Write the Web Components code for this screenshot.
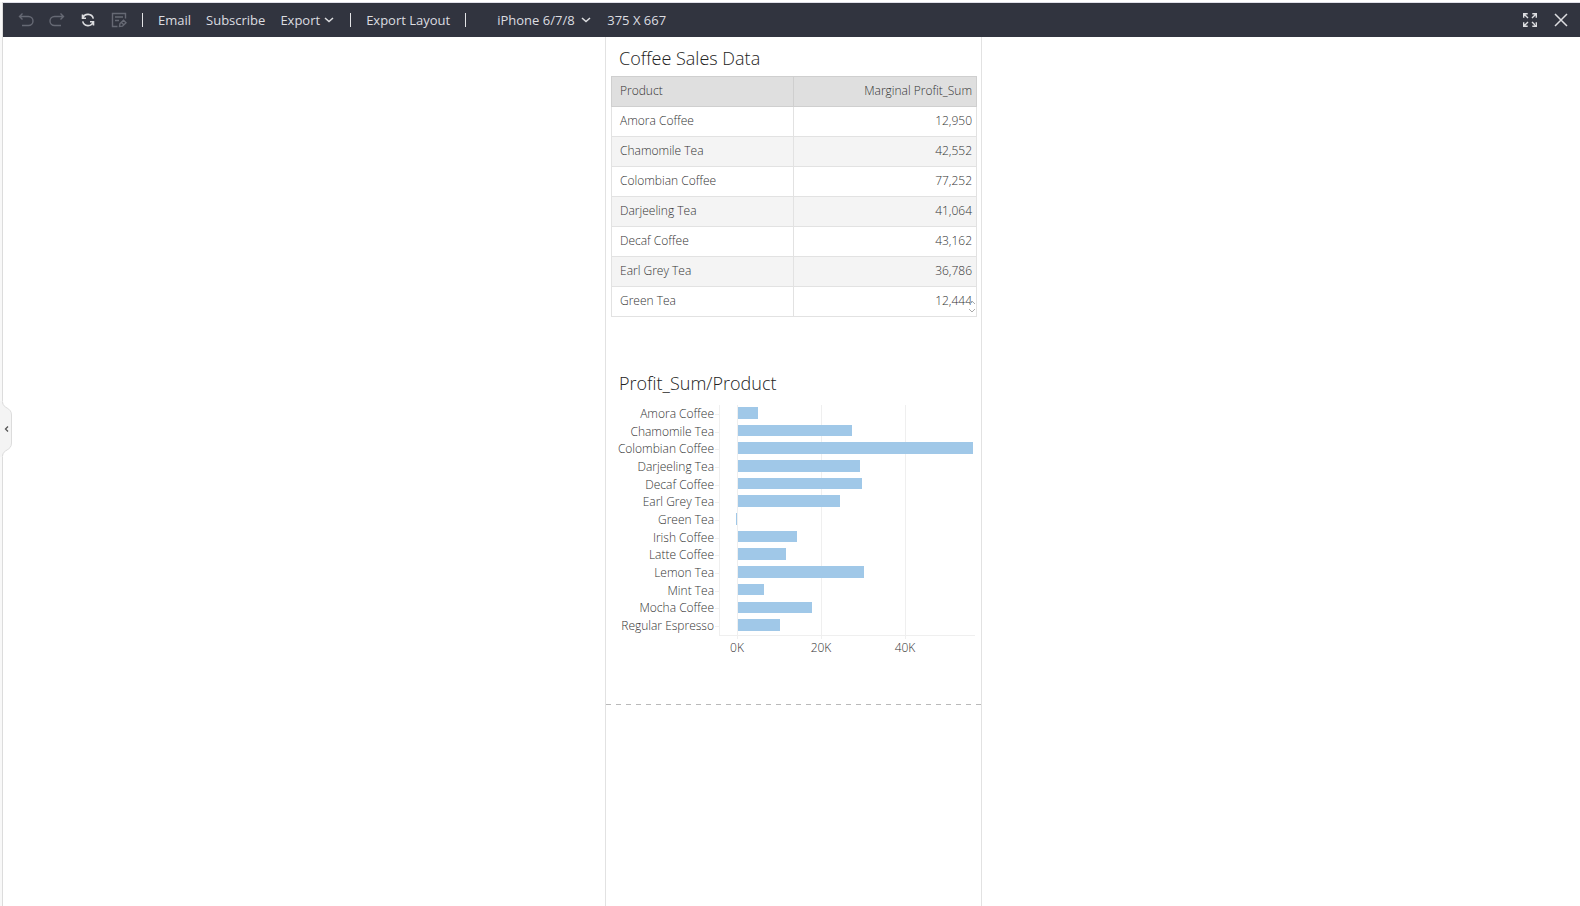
<!DOCTYPE html>
<html lang="en">
<head>
<meta charset="utf-8">
<title>Coffee Sales Data</title>
<style>
  html, body { margin: 0; height: 100%; }
  body { background: #fff; font-family: "Open Sans", "Noto Sans", sans-serif; color: #444; overflow: hidden; }
</style>
</head>
<body>
<layout-preview></layout-preview>

<template id="t-preview">
  <style>
    :host { display: grid; grid-template: 2px 1fr / 3px 1fr; height: 100vh; }
    .frame { grid-area: 2 / 2; display: flex; flex-direction: column; min-width: 0; min-height: 0; border-top: 1px solid #dfdfe8; }
    pane-handle { grid-area: 2 / 1; }
    main { flex: 1; min-height: 0; display: flex; justify-content: center; padding-left: 4px; overflow: hidden; }
  </style>
  <pane-handle></pane-handle>
  <div class="frame">
    <tool-bar></tool-bar>
    <main>
      <device-canvas>
        <dash-card heading="Coffee Sales Data"><profit-table></profit-table></dash-card>
        <dash-card heading="Profit_Sum/Product"><bar-chart></bar-chart></dash-card>
      </device-canvas>
    </main>
  </div>
</template>

<template id="t-handle">
  <style>
    :host { display: flex; align-items: center; box-sizing: border-box; width: 3px; padding-bottom: 50px; background: #f8f8f8; border-right: 1px solid #dcdcdc; }
    button { flex: none; width: 12px; height: 56px; padding: 0; border: 0; background: none; position: relative; z-index: 1; }
    svg { display: block; }
  </style>
  <button aria-label="Collapse panel">
    <svg width="12" height="56" viewBox="0 0 12 56"><path d="M0 0H2.500V1C3 8 11.500 6 11.500 14V42C11.500 50 3 48 2.500 55V56H0Z" fill="#f4f4f4"/><path d="M2.500 1C3 8 11.500 6 11.500 14V42C11.500 50 3 48 2.500 55" fill="none" stroke="#dcdcdc"/><path d="M8 25.500L5.500 28L8 30.500" fill="none" stroke="#555" stroke-width="1.300"/></svg>
  </button>
</template>

<template id="t-toolbar">
  <style>
    :host { display: flex; align-items: center; flex: none; height: 34px; box-sizing: border-box; padding: 0 12px 0 15px; background: #31343f; color: #dcdde0; font-size: 13px; line-height: 20px; white-space: nowrap; }
    svg { display: block; fill: none; stroke: currentColor; }
    button, select { font: inherit; color: inherit; background: none; border: 0; padding: 0; margin: 0; }
    .icons { display: flex; gap: 15px; }
    .off { color: #666974; }
    i { width: 1px; height: 14px; background: #e2e3e6; }
    .texts { display: flex; gap: 15px; margin: 0 16px 0 15px; }
    .menu { display: flex; align-items: center; gap: 4px; }
    .layout { margin: 0 15px; }
    .device { display: flex; align-items: center; position: relative; margin-left: 31px; }
    .device select { appearance: none; width: 94px; outline: 0; }
    .device svg { position: absolute; right: 0; pointer-events: none; }
    .size { margin-left: 16px; }
    .end { display: flex; align-items: center; gap: 17px; margin-left: auto; }
  </style>
  <div class="icons">
    <button class="off" disabled aria-label="Undo"><svg width="16" height="16" viewBox="0 0 16 16" stroke-width="1.400"><path d="M4.500 1.500L1.500 4.500L4.500 7.500M1.500 4.500H10.500A4.500 4.500 0 0 1 10.500 13.500H4"/></svg></button>
    <button class="off" disabled aria-label="Redo"><svg width="16" height="16" viewBox="0 0 16 16" stroke-width="1.400"><path d="M11.500 1.500L14.500 4.500L11.500 7.500M14.500 4.500H5.500A4.500 4.500 0 0 0 5.500 13.500H12"/></svg></button>
    <button aria-label="Refresh"><svg width="16" height="16" viewBox="0 0 16 16" stroke-width="1.600"><path d="M2.500 2.500V6.300H6M2.800 6A5.500 5.500 0 0 1 13.300 6.600M13.500 13.500V9.700H10M13.200 10A5.500 5.500 0 0 1 2.700 9.400"/></svg></button>
    <button class="off" disabled aria-label="Edit properties"><svg width="16" height="16" viewBox="0 0 16 16" stroke-width="1.400"><path d="M6.500 14.500H1.500V1.500H14.500V6.500M4 5H12M4 8.500H8"/><path d="M8.500 14.500L9 11.500L12.500 8.300L15 10.700L11.500 14.200ZM10.500 10.500L13 13"/></svg></button>
  </div>
  <i style="margin-left:15px"></i>
  <div class="texts">
    <button>Email</button>
    <button>Subscribe</button>
    <button class="menu">Export <svg width="10" height="6" viewBox="0 0 10 6" stroke-width="1.500"><path d="M1 1L5 4.600L9 1"/></svg></button>
  </div>
  <i></i>
  <button class="layout">Export Layout</button>
  <i></i>
  <div class="device">
    <select aria-label="Device"><option>iPhone 6/7/8</option></select>
    <svg width="10" height="6" viewBox="0 0 10 6" stroke-width="1.500"><path d="M1 1L5 4.600L9 1"/></svg>
  </div>
  <span class="size">375 X 667</span>
  <div class="end">
    <button aria-label="Full screen"><svg width="14" height="14" viewBox="0 0 14 14" stroke-width="1.400"><path d="M.7 4.700V.7H4.700M.7 .7L5 5M9.300 .7H13.300V4.700M13.300 .7L9 5M.7 9.300V13.300H4.700M.7 13.300L5 9M9.300 13.300H13.300V9.300M13.300 13.300L9 9"/></svg></button>
    <button aria-label="Close"><svg width="14" height="14" viewBox="0 0 14 14" stroke-width="1.500"><path d="M1 1L13 13M13 1L1 13"/></svg></button>
  </div>
</template>

<template id="t-canvas">
  <style>
    :host { display: block; flex: none; width: 375px; border: solid #e2e2e2; border-width: 0 1px; }
    .screen { display: flex; flex-direction: column; gap: 45px; height: 666px; padding: 0 4px 0 5px; }
    .fold { height: 1px; margin-top: 1px; background: repeating-linear-gradient(90deg, #b9b9b9 0 5px, transparent 5px 10px); }
  </style>
  <div class="screen"><slot></slot></div>
  <div class="fold"></div>
</template>

<template id="t-card">
  <style>
    :host { display: block; }
    h2 { margin: 0; padding: 5px 8px 2px; font-size: 18px; line-height: 32px; font-weight: 300; color: #222; }
  </style>
  <h2></h2>
  <slot></slot>
</template>

<template id="t-table">
  <style>
    :host { display: block; position: relative; }
    table { width: 100%; border-collapse: collapse; table-layout: fixed; font-size: 12px; line-height: 17px; color: #333; }
    th, td { height: 27px; padding: 0 4px 2px 8px; border: 1px solid #e2e2e2; font-weight: 300; text-align: left; }
    th:first-child { width: 169px; }
    th { background: #dfdfdf; border-color: #cfcfcf; }
    th + th, td + td { text-align: right; }
    tbody tr:nth-child(even) { background: #f4f4f4; }
    svg { position: absolute; right: 1px; bottom: 4px; fill: none; stroke: #aaa; }
  </style>
  <table>
    <thead><tr><th scope="col">Product</th><th scope="col">Marginal Profit_Sum</th></tr></thead>
    <tbody></tbody>
  </table>
  <svg width="8" height="13" viewBox="0 0 8 13"><path d="M1 4L4 1L7 4M1 9L4 12L7 9"/></svg>
</template>

<template id="t-chart">
  <style>
    :host { display: block; padding-top: 4px; }
    svg { display: block; font-size: 12px; font-weight: 300; fill: #333; }
    .grid { stroke: #efefef; }
    .bar { fill: #a0c8e8; }
  </style>
  <svg width="366" height="260" role="img" aria-label="Profit_Sum by Product"></svg>
</template>

<script>
  class Base extends HTMLElement {
    constructor(id) {
      super();
      this.attachShadow({ mode: 'open' }).append(document.getElementById(id).content.cloneNode(true));
    }
  }
  const simple = (tag, id) => customElements.define(tag, class extends Base { constructor() { super(id); } });

  customElements.define('dash-card', class extends Base {
    constructor() { super('t-card'); }
    connectedCallback() { this.shadowRoot.querySelector('h2').textContent = this.getAttribute('heading'); }
  });

  customElements.define('profit-table', class extends Base {
    constructor() {
      super('t-table');
      const rows = [['Amora Coffee', '12,950'], ['Chamomile Tea', '42,552'], ['Colombian Coffee', '77,252'],
        ['Darjeeling Tea', '41,064'], ['Decaf Coffee', '43,162'], ['Earl Grey Tea', '36,786'], ['Green Tea', '12,444']];
      this.shadowRoot.querySelector('tbody').innerHTML =
        rows.map(([p, v]) => `<tr><td>${p}</td><td>${v}</td></tr>`).join('');
    }
  });

  customElements.define('bar-chart', class extends Base {
    constructor() {
      super('t-chart');
      // Profit in thousands
      const data = [['Amora Coffee', 4.8], ['Chamomile Tea', 27.2], ['Colombian Coffee', 56], ['Darjeeling Tea', 29.1],
        ['Decaf Coffee', 29.6], ['Earl Grey Tea', 24.4], ['Green Tea', -0.3], ['Irish Coffee', 14.1], ['Latte Coffee', 11.5],
        ['Lemon Tea', 30.1], ['Mint Tea', 6.2], ['Mocha Coffee', 17.7], ['Regular Espresso', 10.1]];
      const left = 108, zero = 126, unit = 4.2, height = 230, step = height / data.length;
      let out = '';
      for (const x of [left, zero, zero + 84, zero + 168])
        out += `<path class="grid" d="M${x + 0.5} 0V${x === left ? height : height + 4}"/>`;
      out += `<path class="grid" d="M${left} ${height + 0.5}H364"/>`;
      data.forEach(([name, value], i) => {
        const mid = Math.round(step * (i + 0.5)), top = Math.round(step * i + 1.9), bottom = Math.round(step * i + 13.5);
        const x = value < 0 ? zero - 1 : zero + 1, w = Math.max(1, Math.round(value * unit));
        out += `<path class="grid" d="M${left - 4} ${mid + 0.5}h4"/>` +
          `<text x="${left - 5}" y="${mid + 4}" text-anchor="end">${name}</text>` +
          `<rect class="bar" x="${x}" y="${top}" width="${w}" height="${bottom - top}"/>`;
      });
      ['0K', '20K', '40K'].forEach((t, i) => out += `<text x="${zero + i * 84}" y="247" text-anchor="middle">${t}</text>`);
      this.shadowRoot.querySelector('svg').innerHTML = out;
    }
  });

  simple('pane-handle', 't-handle');
  simple('tool-bar', 't-toolbar');
  simple('device-canvas', 't-canvas');
  simple('layout-preview', 't-preview');
</script>
</body>
</html>
